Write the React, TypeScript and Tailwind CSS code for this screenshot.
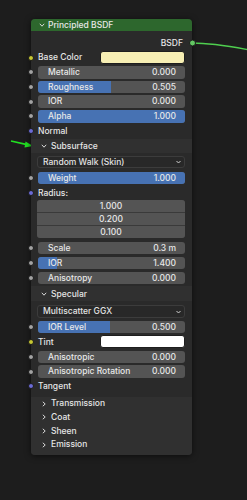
import React from 'react';

const font = { fontFamily: 'Inter, "DejaVu Sans", sans-serif' };

type SocketKind = 'gray' | 'yellow' | 'purple';

function Socket({ kind }: { kind: SocketKind }) {
  const color =
    kind === 'yellow' ? 'bg-[#c8c832]' : kind === 'purple' ? 'bg-[#6b6bd6]' : 'bg-[#a3a3a3]';
  return (
    <span
      className={`absolute left-[-3px] top-1/2 -translate-y-1/2 w-[6px] h-[6px] rounded-full border border-[#1a1a1a] ${color}`}
    />
  );
}

// numeric slider field, fill is 0..1 portion shown in blue
function Field({ label, value, fill = 0, h = 'h-[14.7px]' }: { label: string; value: string; fill?: number; h?: string }) {
  return (
    <div className={`relative flex items-center ${h}`}>
      <Socket kind="gray" />
      <div className="relative ml-[7px] mr-[7px] flex-1 h-[12.5px] rounded-[3px] bg-[#545454] overflow-hidden">
        {fill > 0 && (
          <div className="absolute left-0 top-0 bottom-0 bg-[#4772b3]" style={{ width: `${fill * 100}%` }} />
        )}
        <div className="relative flex h-full items-center justify-between pl-[10px] pr-[9px] text-[#e8e8e8]">
          <span>{label}</span>
          <span>{value}</span>
        </div>
      </div>
    </div>
  );
}

function Chevron({ open }: { open: boolean }) {
  return (
    <svg width="6" height="6" viewBox="0 0 6 6" className="shrink-0">
      {open ? (
        <path d="M0.8 1.8 L3 4.2 L5.2 1.8" fill="none" stroke="#d8d8d8" strokeWidth="1" />
      ) : (
        <path d="M1.8 0.8 L4.2 3 L1.8 5.2" fill="none" stroke="#d8d8d8" strokeWidth="1" />
      )}
    </svg>
  );
}

function Dropdown({ text }: { text: string }) {
  return (
    <div className="ml-[6px] mr-[7px] h-[12.5px] rounded-[3px] bg-[#282828] border border-[#3c3c3c] flex items-center justify-between pl-[5px] pr-[3px] text-[#e3e3e3]">
      <span>{text}</span>
      <svg width="5" height="4" viewBox="0 0 5 4">
        <path d="M0.5 1 L2.5 3 L4.5 1" fill="none" stroke="#d0d0d0" strokeWidth="1" />
      </svg>
    </div>
  );
}

export default function App() {
  return (
    <div className="relative w-[247px] h-[500px] bg-[#1d1d1d] overflow-hidden text-[8.5px] font-medium leading-none" style={font}>
      {/* wire + annotation arrow */}
      <svg className="absolute inset-0 pointer-events-none" width="247" height="500">
        <path d="M192 43 C212 43 228 46 247 49.5" fill="none" stroke="#4fcf4f" strokeWidth="1.3" />
        <line x1="11" y1="141" x2="27" y2="144.6" stroke="#22e022" strokeWidth="1.6" />
        <path d="M33 146 L25.5 141.5 L24.5 147.5 Z" fill="#22e022" />
      </svg>

      <div className="absolute left-[31px] top-[19px] w-[161px] rounded-[4px] bg-[#2a2a2a] shadow-[0_1px_6px_rgba(0,0,0,0.6)] text-[#e6e6e6]">
        {/* header */}
        <div className="h-[12px] rounded-t-[4px] bg-[#2d672d] flex items-center pl-[8px] gap-[3px]">
          <Chevron open />
          <span className="text-[#e8e8e8]">Principled BSDF</span>
        </div>

        {/* output */}
        <div className="relative mt-[5px] h-[14px] flex items-center justify-end pr-[9px]">
          <span>BSDF</span>
          <span className="absolute right-[-3.5px] top-1/2 -translate-y-1/2 w-[7px] h-[7px] rounded-full bg-[#63c763] border border-[#1a1a1a]" />
        </div>

        <div className="relative h-[15px] flex items-center pl-[7px]">
          <Socket kind="yellow" />
          <span className="flex-1">Base Color</span>
          <div className="mr-[7px] w-[85px] h-[13px] rounded-[3px] bg-[#f7efb4] border border-[#1e1e1e]" />
        </div>

        <Field label="Metallic" value="0.000" />
        <Field label="Roughness" value="0.505" fill={0.497} />
        <Field label="IOR" value="0.000" />
        <Field label="Alpha" value="1.000" fill={1} />

        <div className="relative h-[15px] flex items-center pl-[7px]">
          <Socket kind="purple" />
          <span>Normal</span>
        </div>

        {/* Subsurface panel */}
        <div className="h-[14px] bg-[#303030] flex items-center pl-[10px] gap-[4px]">
          <Chevron open />
          <span>Subsurface</span>
        </div>
        <div className="h-[17.5px] pt-[3px]">
          <Dropdown text="Random Walk (Skin)" />
        </div>
        <Field label="Weight" value="1.000" fill={1} h="h-[15px]" />
        <div className="relative h-[15px] flex items-center pl-[7px]">
          <Socket kind="purple" />
          <span>Radius:</span>
        </div>
        <div className="ml-[6px] mr-[7px] rounded-[3px] overflow-hidden flex flex-col gap-[1px] bg-[#3a3a3a]">
          {['1.000', '0.200', '0.100'].map((v) => (
            <div key={v} className="h-[12px] bg-[#545454] flex items-center justify-center text-[#e8e8e8]">
              {v}
            </div>
          ))}
        </div>
        <div className="mt-[2px]">
          <Field label="Scale" value="0.3 m" h="h-[15px]" />
          <Field label="IOR" value="1.400" fill={0.13} h="h-[15px]" />
          <Field label="Anisotropy" value="0.000" h="h-[15px]" />
        </div>

        {/* Specular panel */}
        <div className="mt-[1px] h-[15px] bg-[#303030] flex items-center pl-[10px] gap-[4px]">
          <Chevron open />
          <span>Specular</span>
        </div>
        <div className="h-[18px] pt-[4px]">
          <Dropdown text="Multiscatter GGX" />
        </div>
        <Field label="IOR Level" value="0.500" fill={0.49} h="h-[15px]" />
        <div className="relative h-[15px] flex items-center pl-[7px]">
          <Socket kind="yellow" />
          <span className="flex-1">Tint</span>
          <div className="mr-[7px] w-[85px] h-[13px] rounded-[3px] bg-white border border-[#1e1e1e]" />
        </div>
        <Field label="Anisotropic" value="0.000" h="h-[15px]" />
        <Field label="Anisotropic Rotation" value="0.000" h="h-[14.5px]" />
        <div className="relative h-[15px] flex items-center pl-[7px]">
          <Socket kind="purple" />
          <span>Tangent</span>
        </div>

        {/* collapsed panels */}
        <div className="mt-[3px] pb-[3px] bg-[#303030] rounded-b-[4px]">
          {['Transmission', 'Coat', 'Sheen', 'Emission'].map((p) => (
            <div key={p} className="h-[13.7px] flex items-center pl-[10px] gap-[4px]">
              <Chevron open={false} />
              <span>{p}</span>
            </div>
          ))}
        </div>
      </div>
    </div>
  );
}
